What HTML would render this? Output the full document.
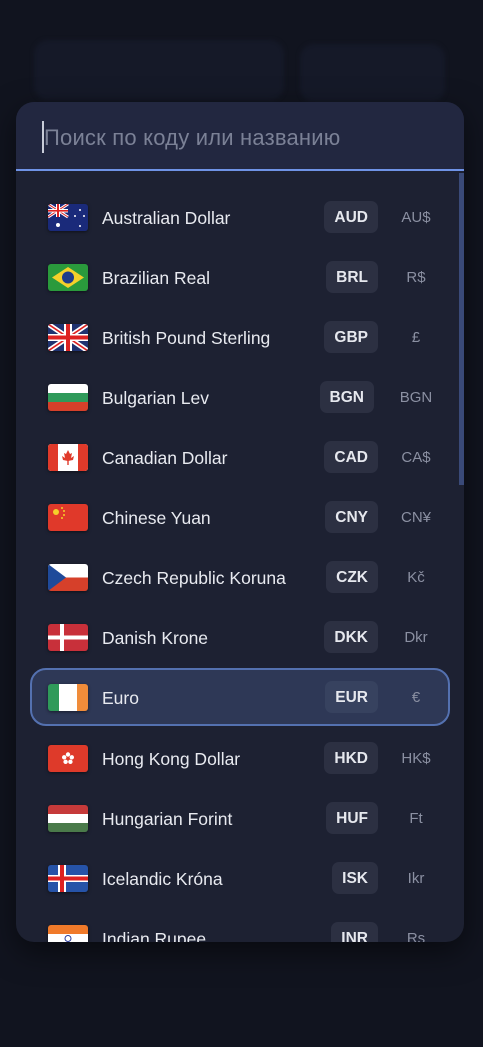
<!DOCTYPE html>
<html><head><meta charset="utf-8"><style>
*{margin:0;padding:0;box-sizing:border-box}
body{width:483px;height:1047px;background:#11141f;font-family:"Liberation Sans","DejaVu Sans",sans-serif;position:relative;overflow:hidden}
.bgc{position:absolute;background:#151928;border-radius:14px;filter:blur(2px)}
.panel{position:absolute;left:16px;top:102px;width:448px;height:840px;background:#1d2132;border-radius:18px;overflow:hidden;box-shadow:0 10px 30px rgba(0,0,0,.5)}
.search{height:69px;background:#222740;border-bottom:2px solid #6f93e6;position:relative}
.search span{position:absolute;left:28px;top:23px;font-size:22px;letter-spacing:0.2px;color:#7b8196}
.search i{position:absolute;left:26px;top:19px;width:2px;height:32px;background:#c8ccd8}
.sb{position:absolute;left:443px;top:71px;width:5px;height:312px;background:#3a4a78}
.row{position:absolute;left:14px;width:420px;height:58px}
.row.sel{background:#2e3856;border:2px solid #5471b0;border-radius:16px}
.flag{position:absolute;left:18px;top:16px;width:40px;height:27px;border-radius:3px;overflow:hidden;box-shadow:0 1px 3px rgba(0,0,0,.5)}
.row.sel .flag{left:16px;top:14px}
.name{position:absolute;left:72px;top:20px;font-size:17.5px;color:#e8eaf0}
.row.sel .name{left:70px;top:18px}
.code{position:absolute;right:72px;top:13px;height:32px;padding:0 10px;line-height:33px;background:#2c3042;border-radius:7px;font-weight:bold;font-size:15.5px;color:#e6e8ee}
.row.sel .code{right:70px;top:11px;background:#37425f}
.sym{position:absolute;right:8px;width:52px;text-align:center;top:21px;font-size:15px;color:#8b90a2}
.row.sel .sym{right:6px;top:19px}
</style></head><body>
<div class="bgc" style="left:34px;top:40px;width:250px;height:60px"></div>
<div class="bgc" style="left:300px;top:44px;width:145px;height:58px"></div>
<div class="panel">
<div class="search"><i></i><span>Поиск по коду или названию</span></div>
<div class="sb"></div>

<div class="row" style="top:86px"><div class="flag"><svg width="40" height="27" viewBox="0 0 40 27"><rect width="40" height="27" fill="#1a2a7a"/><path d="M0 0L20 13M20 0L0 13" stroke="#fff" stroke-width="3"/><path d="M0 0L20 13M20 0L0 13" stroke="#d22" stroke-width="1"/><rect x="8" width="4" height="13" fill="#fff"/><rect y="5" width="20" height="3.5" fill="#fff"/><rect x="9" width="2" height="13" fill="#d22"/><rect y="6" width="20" height="1.6" fill="#d22"/><circle cx="10" cy="21" r="2" fill="#fff"/><circle cx="32" cy="6" r="1" fill="#fff"/><circle cx="27" cy="12" r="1" fill="#fff"/><circle cx="36" cy="12" r="1" fill="#fff"/><circle cx="32" cy="22" r="1" fill="#fff"/></svg></div><div class="name">Australian Dollar</div><div class="code">AUD</div><div class="sym">AU$</div></div>

<div class="row" style="top:146px"><div class="flag"><svg width="40" height="27"><rect width="40" height="27" fill="#2a9a3c"/><path d="M20 3L36 13.5L20 24L4 13.5Z" fill="#f5d02a"/><circle cx="20" cy="13.5" r="6" fill="#1f3c8a"/></svg></div><div class="name">Brazilian Real</div><div class="code">BRL</div><div class="sym">R$</div></div>

<div class="row" style="top:206px"><div class="flag"><svg width="40" height="27"><rect width="40" height="27" fill="#1f3270"/><path d="M0 0L40 27M40 0L0 27" stroke="#fff" stroke-width="5"/><path d="M0 0L40 27M40 0L0 27" stroke="#d22" stroke-width="1.6"/><rect x="16" width="8" height="27" fill="#fff"/><rect y="10" width="40" height="7" fill="#fff"/><rect x="18" width="4" height="27" fill="#d22"/><rect y="11.5" width="40" height="4" fill="#d22"/></svg></div><div class="name">British Pound Sterling</div><div class="code">GBP</div><div class="sym">£</div></div>

<div class="row" style="top:266px"><div class="flag"><svg width="40" height="27"><rect width="40" height="9" fill="#fff"/><rect y="9" width="40" height="9" fill="#2f9a5a"/><rect y="18" width="40" height="9" fill="#d6402a"/></svg></div><div class="name">Bulgarian Lev</div><div class="code" style="right:76px">BGN</div><div class="sym">BGN</div></div>

<div class="row" style="top:326px"><div class="flag"><svg width="40" height="27"><rect width="40" height="27" fill="#fff"/><rect width="10" height="27" fill="#e03a2a"/><rect x="30" width="10" height="27" fill="#e03a2a"/><path d="M20 6L22 10L24 9L23 14L26 12L25 16L20 17L15 16L14 12L17 14L16 9L18 10Z" fill="#e03a2a"/><rect x="19.3" y="16" width="1.4" height="5" fill="#e03a2a"/></svg></div><div class="name">Canadian Dollar</div><div class="code">CAD</div><div class="sym">CA$</div></div>

<div class="row" style="top:386px"><div class="flag"><svg width="40" height="27"><rect width="40" height="27" fill="#e0392a"/><circle cx="8" cy="8" r="3" fill="#f5d02a"/><circle cx="14" cy="4" r="1" fill="#f5d02a"/><circle cx="16" cy="7" r="1" fill="#f5d02a"/><circle cx="16" cy="11" r="1" fill="#f5d02a"/><circle cx="14" cy="14" r="1" fill="#f5d02a"/></svg></div><div class="name">Chinese Yuan</div><div class="code">CNY</div><div class="sym">CN¥</div></div>

<div class="row" style="top:446px"><div class="flag"><svg width="40" height="27"><rect width="40" height="13.5" fill="#fff"/><rect y="13.5" width="40" height="13.5" fill="#d6402a"/><path d="M0 0L18 13.5L0 27Z" fill="#1f4a9a"/></svg></div><div class="name">Czech Republic Koruna</div><div class="code">CZK</div><div class="sym">Kč</div></div>

<div class="row" style="top:506px"><div class="flag"><svg width="40" height="27"><rect width="40" height="27" fill="#c8303a"/><rect x="12" width="4" height="27" fill="#fff"/><rect y="11.5" width="40" height="4" fill="#fff"/></svg></div><div class="name">Danish Krone</div><div class="code">DKK</div><div class="sym">Dkr</div></div>

<div class="row sel" style="top:566px"><div class="flag"><svg width="40" height="27"><rect width="11" height="27" fill="#2f9a5a"/><rect x="11" width="18" height="27" fill="#fff"/><rect x="29" width="11" height="27" fill="#f08c3a"/></svg></div><div class="name">Euro</div><div class="code">EUR</div><div class="sym">€</div></div>

<div class="row" style="top:627px"><div class="flag"><svg width="40" height="27"><rect width="40" height="27" fill="#de3a2a"/><g fill="#fff"><circle cx="20" cy="9.5" r="2.2"/><circle cx="23.8" cy="12.3" r="2.2"/><circle cx="22.4" cy="16.8" r="2.2"/><circle cx="17.6" cy="16.8" r="2.2"/><circle cx="16.2" cy="12.3" r="2.2"/></g><circle cx="20" cy="13.5" r="1" fill="#de3a2a"/></svg></div><div class="name">Hong Kong Dollar</div><div class="code">HKD</div><div class="sym">HK$</div></div>

<div class="row" style="top:687px"><div class="flag"><svg width="40" height="27"><rect width="40" height="9" fill="#c63a3a"/><rect y="9" width="40" height="9" fill="#fff"/><rect y="18" width="40" height="9" fill="#4a7a4a"/></svg></div><div class="name">Hungarian Forint</div><div class="code">HUF</div><div class="sym">Ft</div></div>

<div class="row" style="top:747px"><div class="flag"><svg width="40" height="27"><rect width="40" height="27" fill="#2653a8"/><rect x="10" width="8" height="27" fill="#fff"/><rect y="10" width="40" height="7" fill="#fff"/><rect x="12" width="4" height="27" fill="#d22"/><rect y="11.5" width="40" height="4" fill="#d22"/></svg></div><div class="name">Icelandic Króna</div><div class="code">ISK</div><div class="sym">Ikr</div></div>

<div class="row" style="top:807px"><div class="flag"><svg width="40" height="27"><rect width="40" height="9" fill="#f07a2a"/><rect y="9" width="40" height="9" fill="#fff"/><rect y="18" width="40" height="9" fill="#2f9a5a"/><circle cx="20" cy="13.5" r="3" fill="none" stroke="#2a3a9a"/></svg></div><div class="name">Indian Rupee</div><div class="code">INR</div><div class="sym">Rs</div></div>
</div>
</body></html>
